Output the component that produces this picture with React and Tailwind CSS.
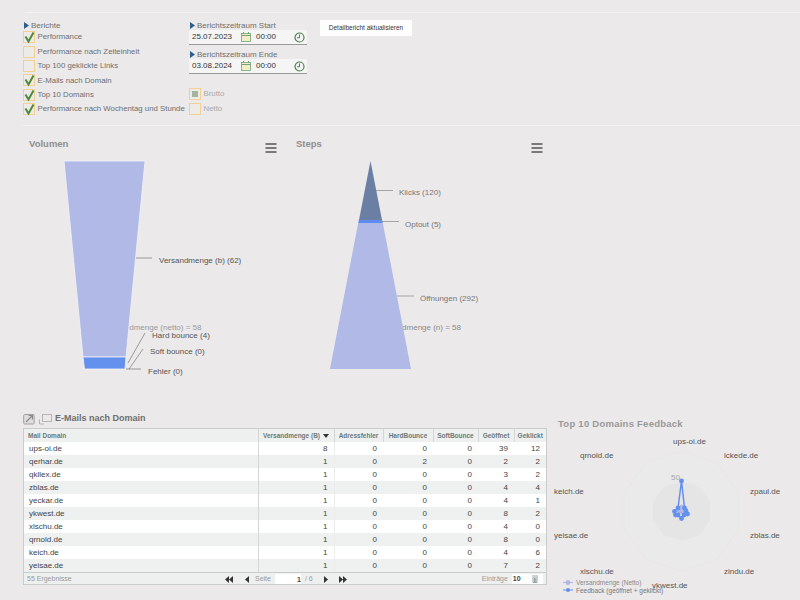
import React from "react";

const reports = [
  { label: "Performance", on: true },
  { label: "Performance nach Zeiteinheit", on: false },
  { label: "Top 100 geklickte Links", on: false },
  { label: "E-Mails nach Domain", on: true },
  { label: "Top 10 Domains", on: true },
  { label: "Performance nach Wochentag und Stunde", on: true },
];

const rows = [
  ["ups-oi.de", 8, 0, 0, 0, 39, 12],
  ["qerhar.de", 1, 0, 2, 0, 2, 2],
  ["qkllex.de", 1, 0, 0, 0, 3, 2],
  ["zblas.de", 1, 0, 0, 0, 4, 4],
  ["yeckar.de", 1, 0, 0, 0, 4, 1],
  ["ykwest.de", 1, 0, 0, 0, 8, 2],
  ["xlschu.de", 1, 0, 0, 0, 4, 0],
  ["qrnold.de", 1, 0, 0, 0, 8, 0],
  ["keich.de", 1, 0, 0, 0, 4, 6],
  ["yeisae.de", 1, 0, 0, 0, 7, 2],
];

const columns = [
  { label: "Mail Domain", width: "w-[234px]", left: true },
  { label: "Versandmenge (B)", width: "w-[76px]", sort: true },
  { label: "Adressfehler", width: "w-[49px]" },
  { label: "HardBounce", width: "w-[50px]" },
  { label: "SoftBounce", width: "w-[45px]" },
  { label: "Geöffnet", width: "w-[36px]" },
  { label: "Geklickt", width: "w-[32px]" },
];

function Triangle() {
  return (
    <svg width="5" height="7" viewBox="0 0 5 7" className="shrink-0">
      <path d="M0 0 L5 3.5 L0 7 Z" fill="#2f5f8f" />
    </svg>
  );
}

function Check({ on, muted, label, faded }) {
  return (
    <div className="flex items-center h-[14.4px] gap-[2.5px]">
      <div className="relative w-3 h-3 shrink-0 border border-[#f2cf92] bg-[#ecebe8]">
        {on && (
          <svg width="13" height="13" viewBox="0 0 13 13" className="absolute -left-px -top-px">
            <path d="M2.5 5.5 L5.5 10.5 L10.5 1.5" fill="none" stroke="#4f8a3c" strokeWidth="2" />
          </svg>
        )}
        {muted && <div className="absolute left-[2px] top-[2px] w-[6px] h-[6px] bg-[#a3b59c]" />}
      </div>
      <span className={faded ? "text-[7.8px] text-[#a9a9a9]" : "text-[7.8px] text-[#6f6f6f] whitespace-nowrap"}>{label}</span>
    </div>
  );
}

function DateField({ title, date }) {
  return (
    <div className="w-[118px]">
      <div className="flex items-center gap-[2px] h-[9px] pl-px text-[8px] text-[#6f6f6f] whitespace-nowrap">
        <Triangle />
        {title}
      </div>
      <div className="flex items-center h-[15px] pl-[3px] pr-[2px] bg-[#f5f5f5] border-b border-[#9a9a9a] text-[8px] text-[#333]">
        <span className="w-[49px]">{date}</span>
        <svg width="10" height="10" viewBox="0 0 10 10">
          <rect x="0.5" y="1.5" width="9" height="8" fill="#f2ecc8" stroke="#6fa66f" strokeWidth="0.8" />
          <path d="M0.5 3.5 H9.5" stroke="#6fa66f" />
          <path d="M2.5 0 V2 M7.5 0 V2" stroke="#6fa66f" />
        </svg>
        <span className="ml-[5px]">00:00</span>
        <svg width="11" height="11" viewBox="0 0 11 11" className="ml-auto">
          <circle cx="5.5" cy="5.5" r="4.5" fill="#f5f5f5" stroke="#4e8050" strokeWidth="1.2" />
          <path d="M5.5 2.5 V5.8 H3" fill="none" stroke="#4e8050" />
        </svg>
      </div>
    </div>
  );
}

function MenuIcon({ x, y }) {
  return (
    <path
      d={`M${x} ${y} h11 M${x} ${y + 4} h11 M${x} ${y + 8} h11`}
      stroke="#555"
      strokeWidth="1.6"
    />
  );
}

function VolumeChart() {
  const label = { fontSize: 8, fill: "#555" };
  return (
    <svg width="257" height="274" viewBox="23 126 257 274" className="shrink-0">
      <text x="29" y="147" fontSize="9.5" fontWeight="700" fill="#8f8f8f">Volumen</text>
      <MenuIcon x={265.5} y={144} />
      <text x="201.5" y="330" textAnchor="end" fontSize="8" fill="#9a9a9a">Versandmenge (netto) = 58</text>
      <path d="M64 161 L145 161 L126 357 L83 357 Z" fill="#b1b9e6" stroke="#f2f2f8" strokeWidth="0.8" />
      <path d="M83 357 L126 357 L125 369 L84.5 369 Z" fill="#6490ee" stroke="#f2f2f8" strokeWidth="0.8" />
      <g stroke="#777" strokeWidth="0.7" fill="none">
        <path d="M136 258 H152" />
        <path d="M128 363 L145 333" />
        <path d="M129 369 L143 349" />
        <path d="M126 369 H141" />
      </g>
      <text x="159" y="263" {...label}>Versandmenge (b) (62)</text>
      <text x="152" y="338" {...label}>Hard bounce (4)</text>
      <text x="150" y="354" {...label}>Soft bounce (0)</text>
      <text x="148" y="374" {...label}>Fehler (0)</text>
    </svg>
  );
}

function StepsChart() {
  const label = { fontSize: 8, fill: "#777" };
  return (
    <svg width="270" height="274" viewBox="280 126 270 274" className="shrink-0">
      <text x="296" y="147" fontSize="9.5" fontWeight="700" fill="#8f8f8f">Steps</text>
      <MenuIcon x={531.5} y={144} />
      <text x="461" y="330" textAnchor="end" fontSize="8" fill="#8a8a8a">Versandmenge (n) = 58</text>
      <path d="M370.5 161 L382 220 L359 220 Z" fill="#6b7fa5" />
      <path d="M358.8 220 L382.2 220 L382.8 223 L358.2 223 Z" fill="#5f8cee" />
      <path d="M358.2 223 L382.8 223 L411 369 L330 369 Z" fill="#b1b9e6" />
      <g stroke="#888" strokeWidth="0.7" fill="none">
        <path d="M376 190.5 H393" />
        <path d="M382 221.5 H399" />
        <path d="M397 296 H414" />
      </g>
      <text x="399" y="195" {...label}>Klicks (120)</text>
      <text x="405" y="227" {...label}>Optout (5)</text>
      <text x="420" y="301" {...label}>Öffnungen (292)</text>
    </svg>
  );
}

function decagon(cx, cy, r) {
  const pts = [];
  for (let i = 0; i < 10; i++) {
    const a = (i * Math.PI) / 5 - Math.PI / 2;
    pts.push(`${(cx + r * Math.cos(a)).toFixed(1)},${(cy + r * Math.sin(a)).toFixed(1)}`);
  }
  return pts.join(" ");
}

function RadarChart() {
  const cx = 681.5;
  const cy = 511;
  const feedback = [
    [681.5, 481], [684.5, 508], [686, 511], [687.5, 514], [684, 515],
    [681.5, 518.5], [678, 515], [675.5, 515], [674.5, 511.5], [678, 508],
  ];
  const volume = [
    [681.5, 505], [684, 507], [685, 510], [684, 513], [683, 515],
    [681.5, 513], [679, 513], [678, 512], [677, 510], [679, 507],
  ];
  const names = [
    ["ups-oi.de", 673, 444],
    ["ickede.de", 724, 458],
    ["zpaul.de", 750, 494],
    ["zblas.de", 750, 538],
    ["zindu.de", 724, 574],
    ["ykwest.de", 652, 588],
    ["xlschu.de", 580, 574],
    ["yeisae.de", 554, 538],
    ["keich.de", 554, 494],
    ["qrnold.de", 580, 458],
  ];
  return (
    <svg width="252" height="195" viewBox="548 405 252 195" className="shrink-0 ml-px">
      <text x="558" y="426.5" fontSize="9.5" fontWeight="700" letterSpacing="0.25" fill="#999">Top 10 Domains Feedback</text>
      <polygon points={decagon(cx, cy, 60)} fill="#eaeaea" stroke="#e6e6e6" strokeWidth="0.6" />
      <polygon points={decagon(cx, cy, 30)} fill="#e6e5e5" />
      <text x="671" y="480" fontSize="8" fill="#a5a5a5">50</text>
      {names.map(([n, x, y]) => (
        <text key={n} x={x} y={y} fontSize="8" fill="#555">{n}</text>
      ))}
      <polygon points={volume.map((p) => p.join(",")).join(" ")} fill="#b1b9e6" stroke="#a9a9d0" strokeWidth="1" />
      <polygon points={feedback.map((p) => p.join(",")).join(" ")} fill="none" stroke="#6490ee" strokeWidth="1.5" />
      {feedback.map(([x, y], i) => (
        <circle key={i} cx={x} cy={y} r="2.4" fill="#6490ee" />
      ))}
      <path d="M563 582.5 H573" stroke="#b1b9e6" />
      <circle cx="568" cy="582.5" r="2.5" fill="#b1b9e6" />
      <path d="M563 590 H573" stroke="#6490ee" />
      <circle cx="568" cy="590" r="2" fill="#6490ee" />
      <text x="576" y="585" fontSize="6.5" fill="#8a8a8a">Versandmenge (Netto)</text>
      <text x="576" y="592.5" fontSize="6.5" fill="#777">Feedback (geöffnet + geklickt)</text>
    </svg>
  );
}

function Pager({ d }) {
  return (
    <svg width="8" height="7" viewBox="0 0 8 7" className="shrink-0">
      <path d={d} fill="#333" />
    </svg>
  );
}

function DomainTable() {
  return (
    <div className="w-[524px] shrink-0">
      <div className="flex items-center h-[23px] pt-[4px]">
        <svg width="13" height="12" viewBox="0 0 13 12">
          <rect x="0.7" y="1.5" width="10.5" height="9.5" rx="1" fill="#dedede" stroke="#a2a2a2" />
          <path d="M3 9 L9 3 M5.5 2.5 H9.5 V6.5" fill="none" stroke="#8a8a8a" strokeWidth="1.2" />
        </svg>
        <svg width="13" height="12" viewBox="0 0 13 12" className="ml-[3px]">
          <rect x="3.5" y="1.5" width="9" height="7" fill="none" stroke="#b5b5b5" />
          <path d="M0.5 6.5 V11 H5" fill="none" stroke="#b5b5b5" />
        </svg>
        <span className="ml-[3px] text-[9px] font-bold text-[#6e6e6e]">E-Mails nach Domain</span>
      </div>
      <div className="border border-[#c9cccc] h-[157px] flex flex-col overflow-hidden">
        <table className="table-fixed w-full border-collapse">
          <thead>
            <tr className="h-[13px] bg-[#eef0f0]">
              {columns.map((c) => (
                <th
                  key={c.label}
                  className={`${c.width} p-0 border-r border-[#d5d7d7] last:border-r-0 text-[6.5px] font-bold text-[#6b7a7a] whitespace-nowrap overflow-hidden ${c.left ? "text-left pl-[4px]" : "text-center"}`}
                >
                  {c.label}
                  {c.sort && (
                    <svg width="6" height="4" viewBox="0 0 6 4" className="inline ml-[3px] align-baseline">
                      <path d="M0 0 H6 L3 4 Z" fill="#333" />
                    </svg>
                  )}
                </th>
              ))}
            </tr>
          </thead>
          <tbody>
            {rows.map((r, i) => (
              <tr key={r[0]} className={i % 2 ? "h-[13px] bg-[#eff0f0]" : "h-[13px] bg-white"}>
                {r.map((v, j) => (
                  <td
                    key={j}
                    className={`p-0 text-[8px] leading-none text-[#444] ${j === 0 ? "text-left pl-[5px] border-r border-[#d5d7d7]" : "text-right pr-[6px]"} ${j === 1 ? "border-r border-[#eceeee]" : ""}`}
                  >
                    {v}
                  </td>
                ))}
              </tr>
            ))}
          </tbody>
        </table>
        <div className="flex items-center h-[13px] bg-[#eef0f0] border-t border-[#c9cccc] text-[7px] text-[#9a9a9a] shrink-0">
          <span className="ml-[3px] w-[198px]">55 Ergebnisse</span>
          <Pager d="M4 0 L0 3.5 L4 7 Z M8 0 L4 3.5 L8 7 Z" />
          <span className="ml-[10px]"><Pager d="M6 0 L2 3.5 L6 7 Z" /></span>
          <span className="ml-[4px]">Seite</span>
          <span className="ml-[4px] w-[26px] h-[11px] bg-white text-right font-bold leading-[11px] text-[#444]">1</span>
          <span className="ml-[4px]">/ 6</span>
          <span className="ml-[10px]"><Pager d="M1 0 L5 3.5 L1 7 Z" /></span>
          <span className="ml-[8px]"><Pager d="M0 0 L4 3.5 L0 7 Z M4 0 L8 3.5 L4 7 Z" /></span>
          <span className="ml-[135px]">Einträge</span>
          <span className="ml-[4px] w-[31px] h-[11px] bg-white pl-[1px] flex items-center justify-between pr-[5px] font-bold text-[#444]">
            10
            <svg width="6" height="8" viewBox="0 0 6 8">
              <path d="M0 1 H6 M1 2 V7.5 H5 V2 M2.5 2.5 V7 M3.7 2.5 V7" fill="none" stroke="#7a8a8a" strokeWidth="0.8" />
            </svg>
          </span>
        </div>
      </div>
    </div>
  );
}

export default function App() {
  return (
    <div className="w-[800px] h-[600px] overflow-hidden bg-[#ebe9ea] font-['Liberation_Sans',Arial,sans-serif] flex flex-col">
      <div className="h-[13px] ml-[25px] border-b border-[#f4f3f3] shrink-0" />
      <div className="h-[113px] ml-[23px] flex items-start border-b border-[#f4f3f3] shrink-0">
        <div className="w-[166px] pt-[8px] shrink-0">
          <div className="flex items-center gap-[2px] h-[9px] pl-px text-[8px] text-[#6f6f6f]">
            <Triangle />
            Berichte
          </div>
          {reports.map((r) => (
            <Check key={r.label} on={r.on} label={r.label} />
          ))}
        </div>
        <div className="pt-[8px] shrink-0 w-[131px]">
          <DateField title="Berichtszeitraum Start" date="25.07.2023" />
          <div className="h-[5px]" />
          <DateField title="Berichtszeitraum Ende" date="03.08.2024" />
          <div className="mt-[13px]">
            <Check muted label="Brutto" faded />
            <Check label="Netto" faded />
          </div>
        </div>
        <button className="mt-[7px] w-[92px] h-[16px] bg-white text-[6.5px] text-[#333]">
          Detailbericht aktualisieren
        </button>
      </div>
      <div className="h-[279px] ml-[23px] flex shrink-0">
        <VolumeChart />
        <StepsChart />
      </div>
      <div className="flex ml-[23px]">
        <DomainTable />
        <RadarChart />
      </div>
    </div>
  );
}
